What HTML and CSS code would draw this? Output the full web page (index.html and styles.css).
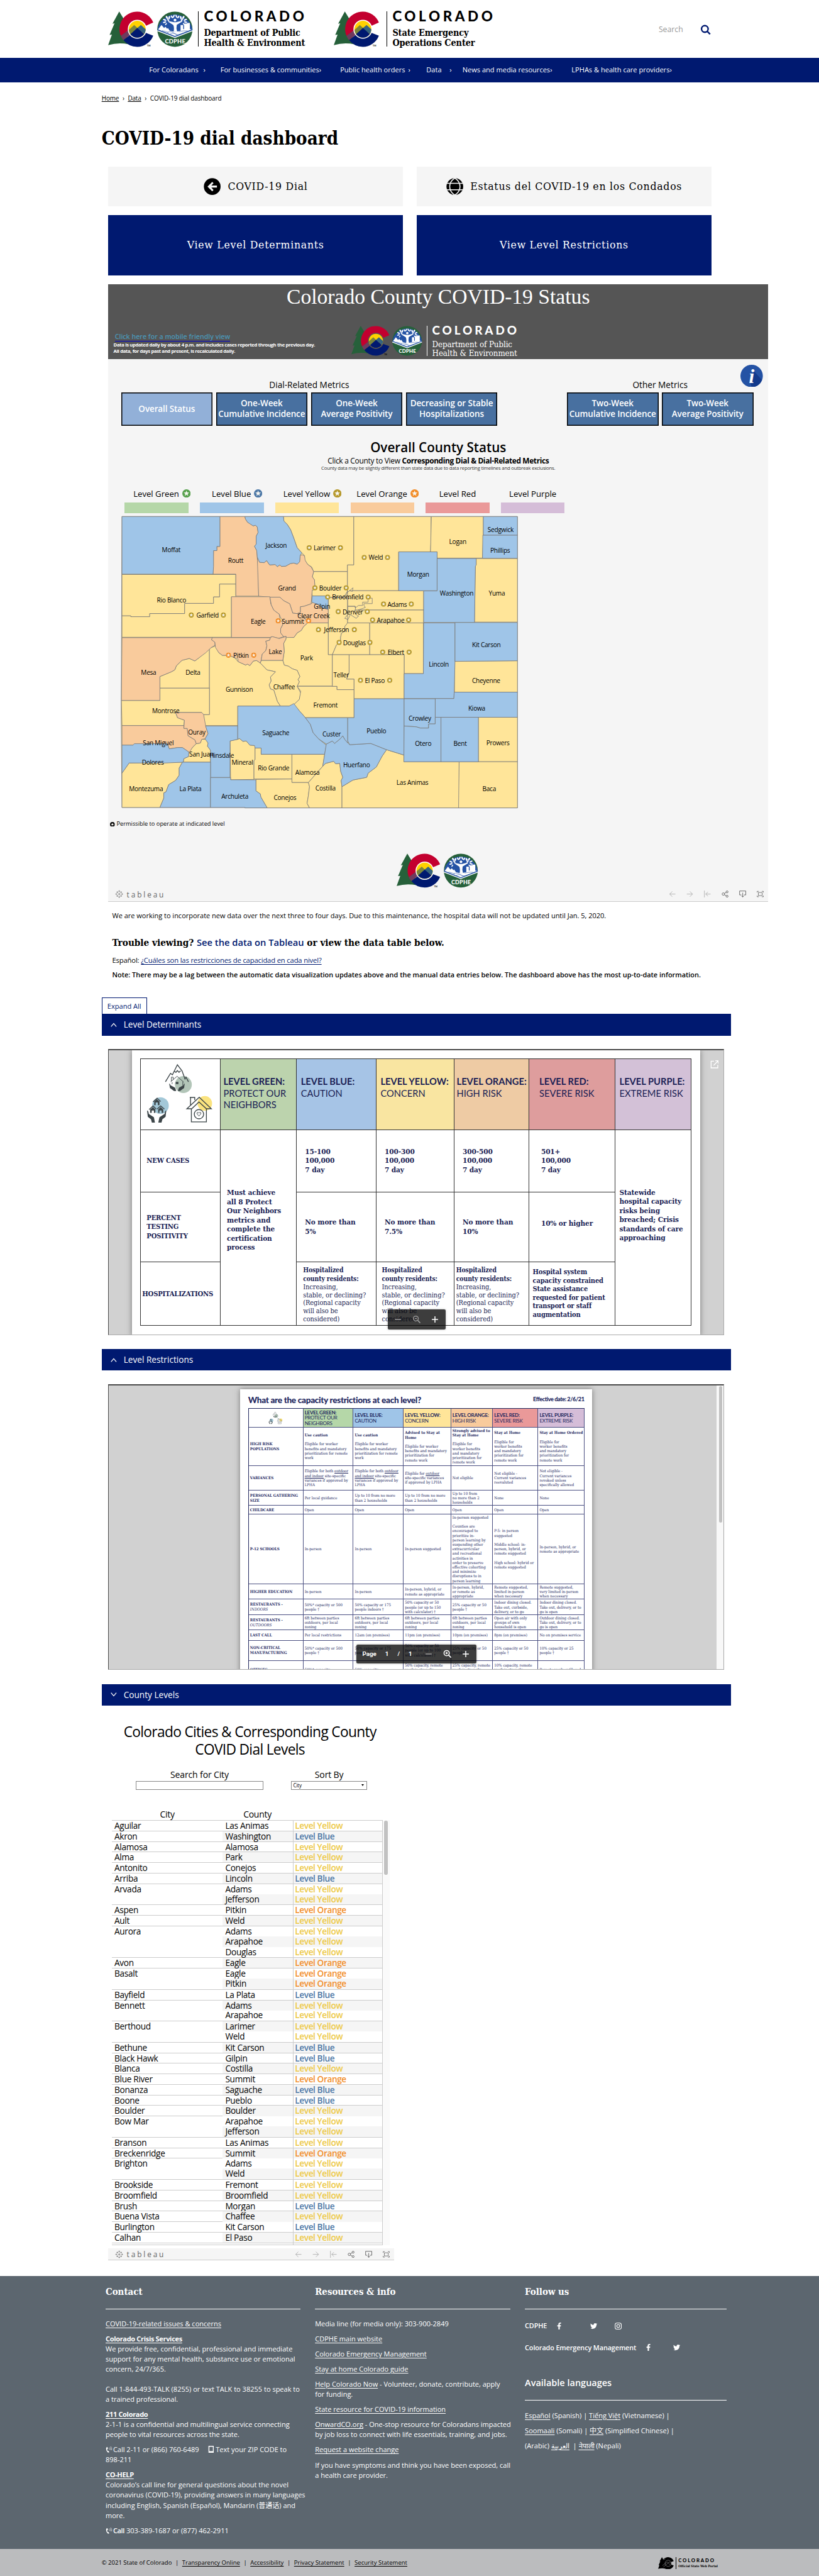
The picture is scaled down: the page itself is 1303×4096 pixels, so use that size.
FILE: index.html
```html
<!DOCTYPE html>
<html lang="en">
<head>
<meta charset="utf-8">
<title>COVID-19 dial dashboard</title>
<link rel="stylesheet" href="styles.css">
</head>
<body>
<svg class="defs" aria-hidden="true">
  <symbol id="co" viewBox="18 28 314 245" overflow="visible">
    <path fill="#26603a" d="M94 29L125 80 160 255Q90 240 18 260L44 188 28 190 62 110 48 113Z"/>
    <path fill="#c3002f" d="M328 105A121 121 0 0 0 218 30A121 121 0 0 0 105 197L160 158 280 126Z"/>
    <path fill="#001970" d="M123 226A121 121 0 0 0 218 272A121 121 0 0 0 328 195L283 178 218 150Z"/>
    <path fill="#6f3a5d" d="M105 197L160 155 180 180 123 226Q112 215 105 197Z"/>
    <circle class="ring" cx="218" cy="151" r="65"/>
    <clipPath id="disc"><circle cx="218" cy="151" r="58"/></clipPath>
    <g clip-path="url(#disc)">
      <path fill="#ffd100" d="M155 90h130v130H155z"/>
      <path fill="#7a853b" d="M150 165L197 122 225 148 180 195 150 190Z"/>
      <path fill="#35647e" d="M215 146L243 122 280 155 270 185Z"/>
      <path fill="#001970" d="M155 200L218 143 285 200V225H155Z"/>
    </g>
  </symbol>
  <symbol id="cdphe" viewBox="351 28 245 245" overflow="visible">
    <circle cx="473" cy="151" r="121" fill="#26603a"/>
    <path fill="#2452a4" d="M353 160A121 121 0 0 1 594 160L473 206Z"/>
    <path fill="none" stroke="#fff" stroke-width="6" d="M352 161L473 208 594 161"/>
    <path fill="#fff" d="M358 152L381 122 399 143 408 134 420 148 425 142 438 162 473 170 512 162V122H530V150H536V112H556V108H576V150L588 152 473 198Z"/>
    <path fill="none" stroke="#2452a4" stroke-width="2.5" d="M420 172Q450 162 470 180T530 178M440 184Q465 172 490 190M385 160Q420 168 430 176M500 168Q530 160 560 162"/>
    <path fill="#fff" d="M464 170Q470 140 462 122L425 98 428 95 466 103H482L522 93 525 97 486 121Q480 145 489 170Z"/>
    <circle cx="474" cy="88" r="9.500" fill="#fff"/>
    <g fill="#fff">
      <ellipse cx="403" cy="87" rx="13" ry="5" transform="rotate(25 403 87)"/><ellipse cx="418" cy="70" rx="12" ry="6" transform="rotate(60 418 70)"/><ellipse cx="402" cy="103" rx="12" ry="5" transform="rotate(-15 402 103)"/><ellipse cx="434" cy="72" rx="12" ry="6" transform="rotate(-70 434 72)"/><ellipse cx="427" cy="88" rx="9" ry="5" transform="rotate(40 427 88)"/><ellipse cx="452" cy="66" rx="11" ry="5" transform="rotate(60 452 66)"/><ellipse cx="465" cy="62" rx="12" ry="5" transform="rotate(-65 465 62)"/><ellipse cx="483" cy="62" rx="12" ry="5" transform="rotate(65 483 62)"/><ellipse cx="497" cy="67" rx="11" ry="5" transform="rotate(-60 497 67)"/><ellipse cx="514" cy="72" rx="12" ry="6" transform="rotate(70 514 72)"/><ellipse cx="531" cy="70" rx="12" ry="6" transform="rotate(-60 531 70)"/><ellipse cx="545" cy="86" rx="13" ry="5" transform="rotate(-25 545 86)"/><ellipse cx="546" cy="102" rx="12" ry="5" transform="rotate(15 546 102)"/><ellipse cx="521" cy="87" rx="9" ry="5" transform="rotate(-40 521 87)"/><ellipse cx="412" cy="116" rx="9" ry="4" transform="rotate(-50 412 116)"/><ellipse cx="534" cy="115" rx="9" ry="4" transform="rotate(50 534 115)"/>
    </g>
  </symbol>
  <symbol id="star" viewBox="-10 -10 20 20"><circle r="10"/><path fill="#f7f7f2" d="M0-7L1.800-2.300 6.700-2.200 2.800 1 4.200 5.700 0 2.900-4.200 5.700-2.800 1-6.700-2.200-1.800-2.300Z"/></symbol>
  <symbol id="tab" viewBox="0 0 20 20"><path fill="none" stroke="#777" stroke-width="1.200" d="M10 7v6M7 10h6M10 1v4M8 3h4M10 15v4M8 17h4M3 8v4M1 10h4M17 8v4M15 10h4M5.500 3.500v4M3.500 5.500h4M14.500 3.500v4M12.500 5.500h4M5.500 12.500v4M3.500 14.500h4M14.500 12.500v4M12.500 14.500h4"/></symbol>
  <symbol id="undo" viewBox="0 0 16 16"><path d="M15 8H2M8 2L2 8l6 6"/></symbol>
  <symbol id="redo" viewBox="0 0 16 16"><path d="M1 8h13M8 2l6 6-6 6"/></symbol>
  <symbol id="reset" viewBox="0 0 16 16"><path d="M1 0v16M15 8H4M9 3L4 8l5 5"/></symbol>
  <symbol id="share" viewBox="0 0 16 16"><circle cx="4" cy="8" r="2.800"/><circle cx="12.500" cy="3" r="2.300"/><circle cx="12.500" cy="13" r="2.300"/><path d="M6 7l4.500-3M6 9.200l4.500 2.800"/></symbol>
  <symbol id="down" viewBox="0 0 16 16"><path d="M5 10H1V1h14v9h-4M8 5v9M5.500 12L8 15l2.500-3"/></symbol>
  <symbol id="full" viewBox="0 0 18 16"><path d="M4 4h10v8H4zM1 4V1h4M13 1h4v3M17 12v3h-4M5 15H1v-3"/></symbol>
  <symbol id="fb" viewBox="0 0 320 512"><path d="M279.140 288l14.220-92.660h-88.910v-60.130c0-25.350 12.420-50.060 52.240-50.060h40.420V6.260S260.430 0 225.360 0c-73.220 0-121.080 44.380-121.080 124.720v70.620H22.890V288h81.390v224h100.170V288z"/></symbol>
  <symbol id="tw" viewBox="0 0 512 512"><path d="M459.370 151.716c.325 4.548.325 9.097.325 13.645 0 138.720-105.583 298.558-298.558 298.558-59.452 0-114.680-17.219-161.137-47.106 8.447.974 16.568 1.299 25.340 1.299 49.055 0 94.213-16.568 130.274-44.832-46.132-.975-84.792-31.188-98.112-72.772 6.498.974 12.995 1.624 19.818 1.624 9.421 0 18.843-1.300 27.614-3.573-48.081-9.747-84.143-51.980-84.143-102.985v-1.299c13.969 7.797 30.214 12.670 47.431 13.319-28.264-18.843-46.781-51.005-46.781-87.391 0-19.492 5.197-37.360 14.294-52.954 51.655 63.675 129.300 105.258 216.365 109.807-1.624-7.797-2.599-15.918-2.599-24.040 0-57.828 46.782-104.934 104.934-104.934 30.213 0 57.502 12.670 76.670 33.137 23.715-4.548 46.456-13.320 66.599-25.340-7.798 24.366-24.366 44.833-46.132 57.827 21.117-2.273 41.584-8.122 60.426-16.243-14.292 20.791-32.161 39.308-52.628 54.253z"/></symbol>
  <symbol id="phone" viewBox="0 0 16 16"><path fill="#fff" d="M4 1L1.500 3Q0 9 6 15l3-1-2-3.500-2 .5Q3.500 8.500 4 6l2-1z"/><path fill="none" stroke="#fff" d="M8 4q2 1 1.500 4M10 2q3.500 2 2.500 7M12 0q4.500 3.500 3 9"/></symbol>
  <symbol id="house" viewBox="0 0 545 480">
    <circle cx="292" cy="174" r="58" fill="#b2c5b8"/><circle cx="135" cy="318" r="57" fill="#a3c8d8"/><circle cx="439" cy="303" r="50" fill="#fae37f"/>
    <g fill="none" stroke="#3c4548" stroke-width="6"><path d="M169 155L204 97 217 107 251 38 283 80 303 135 310 123 327 155M228 82L241 90 251 78 262 90 273 80"/><path stroke-width="4" d="M205 155L249 117 295 158M210 150V123H222V140M288 155V180M215 158V170"/>
    <path d="M84 292L112 267 136 290M57 345L84 320 106 342M112 342L136 320 162 342"/><path d="M316 340L401 261 484 340H450L399 293 349 340ZM347 340V430H450V340M341 315V262H370V280M336 262h36"/><circle cx="399" cy="377" r="32"/><path stroke-width="4" d="M399 390L386 375Q384 363 393 364L399 369 405 364Q415 363 412 375Z"/></g>
    <g fill="#3c4548"><path d="M195 168Q200 165 203 178L235 195 243 218H228L200 198ZM301 168Q296 165 293 178L262 195 254 218H269L297 198Z"/><path d="M240 155h18v16h-18z"/><path d="M92 315V290L110 274 128 290V315H117V297H102V315ZM64 368V345L83 328 100 345V368H90V352H75V368ZM119 368V345L136 328 154 345V368H143V352H128V368Z"/><path d="M43 352Q52 352 55 375L90 398 97 435H76L70 412 48 395ZM175 352Q166 352 163 375L128 398 120 435H142L148 412 170 395Z"/></g>
  </symbol>
</svg>

<header class="top">
  <div class="brand">
    <svg class="m1" viewBox="18 28 314 245"><use href="#co" x="18" y="28" width="314" height="245"/><text class="tm" x="286" y="269">TM</text></svg><svg class="m2" viewBox="351 28 245 245"><use href="#cdphe" x="351" y="28" width="245" height="245"/><text class="cd" x="405" y="248">CDPHE</text></svg>
    <div class="btext"><b>COLORADO</b><span class="n1">Department of Public</span><span class="n2">Health &amp; Environment</span></div>
  </div>
  <div class="brand second">
    <svg class="m1" viewBox="18 28 314 245"><use href="#co" x="18" y="28" width="314" height="245"/><text class="tm" x="286" y="269">TM</text></svg>
    <div class="btext"><b>COLORADO</b><span class="n1">State Emergency</span><span class="n1">Operations Center</span></div>
  </div>
  <div class="search"><span>Search</span><svg viewBox="0 0 24 24"><circle cx="10" cy="10" r="7.500"/><path d="M15.500 15.500L22 22"/></svg></div>
</header>
<nav class="nav"><a>For Coloradans <i class="s1">›</i></a><a>For businesses &amp; communities<i>›</i></a><a>Public health orders <i class="s2">›</i></a><a>Data <i class="s3">›</i></a><a>News and media resources<i>›</i></a><a>LPHAs &amp; health care providers<i>›</i></a></nav>

<main class="main">
  <div class="crumbs"><u>Home</u><i>›</i><u>Data</u><i>›</i><span>COVID-19 dial dashboard</span></div>
  <h1>COVID-19 dial dashboard</h1>
  <div class="tiles">
    <a class="tile light"><svg viewBox="0 0 40 40"><circle cx="20" cy="20" r="19.500"/><path fill="#f5f5f5" d="M9 20L20 9l3 3-5 5.500H31v5H18l5 5.500-3 3z"/></svg>COVID-19 Dial</a>
    <a class="tile light"><svg viewBox="0 0 40 40"><circle cx="20" cy="20" r="19.500"/><path fill="none" stroke="#f5f5f5" stroke-width="2.400" d="M0 12.500h40M0 27.500h40M20 0Q8 8 8 20T20 40M20 0Q32 8 32 20T20 40"/></svg>Estatus del COVID-19 en los Condados</a>
    <a class="tile dark">View Level Determinants</a>
    <a class="tile dark">View Level Restrictions</a>
  </div>

  <section class="viz">
    <div class="vhead">
      <h2>Colorado County COVID-19 Status</h2>
      <div class="vrow">
        <div class="vnote"><a>Click here for a mobile friendly view</a><p>Data is updated daily by about 4 p.m. and includes cases reported through the previous day.</p><p>All data, for days past and present, is recalculated daily.</p></div>
        <div class="brand onDark">
          <svg class="m1" viewBox="18 28 314 245"><use href="#co" x="18" y="28" width="314" height="245"/><text class="tm" x="286" y="269">TM</text></svg><svg class="m2" viewBox="351 28 245 245"><use href="#cdphe" x="351" y="28" width="245" height="245"/><text class="cd" x="405" y="248">CDPHE</text></svg>
          <div class="btext"><b>COLORADO</b><span class="n1">Department of Public</span><span class="n2">Health &amp; Environment</span></div>
        </div>
      </div>
    </div>
    <svg class="info" viewBox="0 0 50 50"><circle cx="25" cy="25" r="25" fill="#2452a4"/><path fill="#123a8c" d="M30 14L48 34A25 25 0 0 1 25 50L22 39Z"/><text x="25" y="40" text-anchor="middle" fill="#fff" font-family="Liberation Serif" font-style="italic" font-weight="700" font-size="44">i</text></svg>
    <div class="metrics">
      <div class="mg"><h4>Dial-Related Metrics</h4><div class="btns"><a class="on">Overall Status</a><a>One-Week<br>Cumulative Incidence</a><a>One-Week<br>Average Positivity</a><a>Decreasing or Stable<br>Hospitalizations</a></div></div>
      <div class="mg"><h4>Other Metrics</h4><div class="btns"><a>Two-Week<br>Cumulative Incidence</a><a>Two-Week<br>Average Positivity</a></div></div>
    </div>
    <h3 class="ocs">Overall County Status</h3>
    <p class="ocs2">Click a County to View <b>Corresponding Dial &amp; Dial-Related Metrics</b></p>
    <p class="ocs3">County data may be slightly different than state data due to data reporting timelines and outbreak exclusions.</p>
    <div class="legend">
      <div class="lg st">Level Green<svg fill="#59a14f"><use href="#star"/></svg></div>
      <div class="lg st">Level Blue<svg fill="#4e79a7"><use href="#star"/></svg></div>
      <div class="lg st">Level Yellow<svg fill="#b6992d"><use href="#star"/></svg></div>
      <div class="lg st">Level Orange<svg fill="#f28e2b"><use href="#star"/></svg></div>
      <div class="lg">Level Red</div>
      <div class="lg">Level Purple</div>
      <div class="bar green"></div><div class="bar blue"></div><div class="bar yellow"></div><div class="bar orange"></div><div class="bar red"></div><div class="bar purple"></div>
    </div>
    <svg class="map" viewBox="6 16 980 694">
      <g transform="scale(.625 .472)" class="lines">
        <path class="y" d="M60 50H1498V1452H507V1450H60L57 1010Z"/>
        <g class="y">
          <path d="M60 329H474V375H415V437H393V468H288V517H161V532H92V528H60Z"/>
          <path d="M474 375V437H458V631H60V528H92V532H161V517H288V468H393V437H415V375Z"/>
          <path d="M647 50H903V283H880V315H757L750 293 735 280 724 258V238L712 222 697 200 685 155 673 113 661 88 649 72Z"/>
          <path d="M757 315H880V410L867 437 810 440 800 432H752L750 405 762 400 760 355 752 340Z"/>
          <path d="M903 50H1184V155L1182 220H1066V407H888L880 415V283H903Z"/>
          <path d="M1185 50H1374V140L1371 250H1206V220H1182Z"/>
          <path d="M1348 252H1498V558H1342L1345 283H1348Z"/>
          <path d="M880 415L900 393 898 410 888 407H1157V500H917L945 488 940 478V469H970V443H955V462H935V478H920L908 490V482H881Z"/>
          <path d="M905 500H1157V562H880V545"/>
          <path d="M810 440V715H825L840 668 855 655V632L858 612 872 598 870 580 880 565V440Z"/>
          <path fill="none" d="M867 437L878 425 880 405M880 445L900 440M881 482H908L910 500 905 510 918 530 921 527 912 540 890 522 882 545 870 540 882 520 881 482"/>
          <path d="M880 562H961V715H825L840 668 855 655V632L858 612 872 598 870 580Z"/>
          <path d="M961 562H1156V806H1086V715H961Z"/>
          <path d="M1269 746L1498 744V895H1269Z"/>
          <path d="M735 562H810V715H825V866H697L705 845 700 835 707 820 697 790 680 783 665 770 650 765 645 742 650 700 648 660 656 640 657 628 685 632 697 610 712 598 720 580Z"/>
          <path d="M378 685V876H198V820L240 797 252 788 258 768 278 742 305 733 325 745 340 730Z"/>
          <path d="M566 742H645L650 765 665 770 680 783 697 790 707 820 700 835 705 845 697 867 710 900 705 930 685 955 668 962H636L625 940 612 885 600 880 595 860 602 842 600 822 618 797 587 788 563 755Z"/>
          <path d="M378 685L400 672 412 705 425 718H450L470 730 482 748 510 765 516 760 525 767 538 745 550 743 563 755 587 788 618 797 600 822 602 842 595 860 600 880 612 885 625 940 636 962H481V1056H362L350 1003H378Z"/>
          <path d="M58 935H198V876H378V1003H350V993H255L262 1018 287 1030 285 1056H60Z"/>
          <path d="M330 1143L345 1140 350 1122H365L373 1140 371 1155 382 1175V1232H283L285 1215 302 1205V1185L317 1160Z"/>
          <path d="M86 1236L280 1232 268 1260V1295L255 1320 230 1340 220 1375 212 1380V1405L198 1450H60V1285Z"/>
          <path d="M697 867H842V883H904V1018H727L705 985 685 955 705 930 710 890Z"/>
          <path d="M825 715H886V800L877 832H904V883H842V867H825Z"/>
          <path d="M886 715H1086V927H904V832H877L886 800Z"/>
          <path d="M453 1130L481 1122 487 1118 500 1132 512 1130 525 1150 544 1152V1220L540 1225V1315L455 1317Z"/>
          <path d="M544 1164H566V1194H678V1313H540V1225L544 1220Z"/>
          <path d="M678 1194H797L790 1252 738 1330H678Z"/>
          <path d="M547 1315L678 1313V1330H738L742 1350 737 1400 733 1430 742 1452H588L565 1400 563 1385 547 1370Z"/>
          <path d="M738 1330L790 1252 800 1238 830 1228 837 1240 852 1238 855 1275 863 1305 857 1320 860 1350V1452H742L733 1430 737 1400 742 1350Z"/>
          <path d="M1356 1016H1498V1230H1356Z"/>
          <path d="M1022 1172L1085 1198V1230H1286V1452H860V1350L900 1318 950 1305 955 1285 985 1255 1005 1205Z"/>
          <path d="M1286 1230H1498V1452H1284Z"/>
        </g>
        <g class="o">
          <path d="M416 50H507L509 62 517 78 525 83 537 95 545 92 552 100 555 127 548 145V183L542 193 550 214 552 245 555 290 557 433H474V327H391L393 214H405V194H416Z"/>
          <path d="M552 245L560 270 577 272 586 262 597 283 617 281 625 291 634 283 640 290 655 289 673 276 685 274 697 279 706 268 708 237 716 234 724 240 726 260 735 280 748 293 757 315 752 340 760 355 762 400 752 404 750 432 748 470 722 482 709 484V512L697 517 681 515 670 470 648 455 634 438H598L557 433Z"/>
          <path d="M458 436H598L601 470 612 500 632 520 636 552 648 560 637 590V610L648 628 630 636 605 628 598 632H458Z"/>
          <path d="M598 438H634L648 455 670 470 681 515 697 517 709 525 730 548 735 562 720 580 712 598 697 610 685 632H660L655 627 648 628 637 610V590L645 570 642 545 636 535 632 520 612 500 603 475Z"/>
          <path d="M709 484L722 482 748 470 755 462 775 475 790 490 810 497V562H735L728 545 709 525 697 517 709 512Z"/>
          <path d="M60 633H390L386 643 398 655V670L385 680 365 705 340 730 325 745 305 733 278 742 258 768 252 788 240 797 198 820V935H58Z"/>
          <path d="M388 633H600L597 645 583 650 587 672 583 695 570 712 566 742 563 755 550 743 538 745 525 767 516 760 510 765 482 748V735L470 730 450 718H425L412 705 400 680 398 655 386 643Z"/>
          <path d="M600 632L607 628 632 637 657 627 656 640 648 660 650 700 645 742H566L570 712 583 695 587 672 583 650 597 645Z"/>
          <path d="M255 993H350L357 1003 364 1056 373 1095 362 1120 350 1122 345 1140 330 1143 325 1125 300 1105 297 1070H285L287 1030 262 1018Z"/>
          <path d="M60 1056H285V1070H297L300 1105 325 1125 330 1143 317 1160 305 1185 280 1162H262L232 1168 225 1143 105 1147 100 1150H60Z"/>
        </g>
        <g class="b">
          <path d="M60 50H416V194H405V214H393V290L391 327H60Z"/>
          <path d="M507 50H647L649 72 661 88 673 113 685 155 697 200 714 225 708 237 706 268 697 279 685 274 673 276 655 289 640 290 634 283 625 291 617 281 597 283 586 262 577 272 560 270 552 245 550 214 542 193 548 183V145L555 127 552 100 545 92 537 95 517 78 509 62Z"/>
          <path d="M752 432H800L810 437V497L790 490 775 475 750 462Z"/>
          <path d="M1374 50H1498V140H1374Z"/><path d="M1372 140H1498V251H1371Z"/><path d="M1066 220H1206V407H1066Z"/>
          <path d="M1206 252H1348V283L1345 290 1342 560H1157V408H1206Z"/>
          <path d="M1157 562H1271V746L1268 895 1267 926H1086V806H1156Z"/>
          <path d="M1271 560H1498V744L1271 747Z"/><path d="M1268 895H1498V1016H1199V926H1267Z"/>
          <path d="M60 1150H100L105 1143H225L232 1168 262 1162H280L303 1183 302 1205 285 1215 283 1232 220 1236H86L60 1285Z"/>
          <path d="M364 1058H481V1122L453 1130V1306H382V1175L371 1155 373 1140 362 1120 373 1095Z"/>
          <path d="M280 1232H382V1450H198L212 1405V1380L220 1375 230 1340 255 1320 268 1295V1260Z"/>
          <path d="M382 1306H455V1317H547V1370L563 1385 565 1400 588 1452H507V1450H382Z"/>
          <path d="M481 962H668L685 950 705 985 727 1018 745 1050 755 1090 775 1120 803 1150 797 1194H566V1164H544L542 1152 525 1150 512 1130 500 1132 487 1118 481 1122Z"/>
          <path d="M803 1145L825 1130 833 1142 855 1118 863 1105 870 1122 888 1148 965 1142 1022 1172 1005 1205 985 1255 955 1285 950 1305 900 1318 860 1350 857 1320 863 1305 855 1275 852 1238 837 1240 830 1228 800 1238 790 1252 797 1194Z"/>
          <path d="M727 1018H881V1140L870 1122 863 1105 855 1118 833 1142 825 1130 803 1145 775 1120 755 1090 745 1050Z"/>
          <path d="M904 927H1086V1198L1022 1172 965 1142 888 1148 881 1130V1018H904Z"/>
          <path d="M1086 927H1199V1048H1175V1068H1145L1130 1062 1086 1058Z"/>
          <path d="M1086 1058L1130 1062 1145 1068H1175V1048H1199V1016H1220V1230H1085Z"/>
          <path d="M1220 1016H1356V1230H1220Z"/>
        </g>
      </g>
      <g fill="#b6992d">
        <use href="#star" x="457" y="88.500" width="12" height="12"/><use href="#star" x="528" y="88.500" width="12" height="12"/>
        <use href="#star" x="582" y="110.500" width="12" height="12"/><use href="#star" x="635" y="110.500" width="12" height="12"/>
        <use href="#star" x="470" y="179.500" width="12" height="12"/><use href="#star" x="541" y="179.500" width="12" height="12"/>
        <use href="#star" x="499" y="200.500" width="12" height="12"/><use href="#star" x="591" y="200.500" width="12" height="12"/>
        <use href="#star" x="626" y="216.500" width="12" height="12"/><use href="#star" x="689" y="216.500" width="12" height="12"/>
        <use href="#star" x="189" y="241.500" width="12" height="12"/><use href="#star" x="262" y="241.500" width="12" height="12"/>
        <use href="#star" x="523" y="233.500" width="12" height="12"/><use href="#star" x="589" y="233.500" width="12" height="12"/>
        <use href="#star" x="601" y="252.500" width="12" height="12"/><use href="#star" x="683" y="252.500" width="12" height="12"/>
        <use href="#star" x="478" y="274.500" width="12" height="12"/><use href="#star" x="559.500" y="274.500" width="12" height="12"/>
        <use href="#star" x="525" y="303.500" width="12" height="12"/><use href="#star" x="595" y="303.500" width="12" height="12"/>
        <use href="#star" x="624" y="325.500" width="12" height="12"/><use href="#star" x="684" y="325.500" width="12" height="12"/>
        <use href="#star" x="573.500" y="389.500" width="12" height="12"/><use href="#star" x="640" y="389.500" width="12" height="12"/>
      </g>
      <g fill="#f28e2b">
        <use href="#star" x="386.500" y="254.500" width="12" height="12"/><use href="#star" x="455.500" y="254.500" width="12" height="12"/>
        <use href="#star" x="273.500" y="332.500" width="12" height="12"/><use href="#star" x="331" y="332.500" width="12" height="12"/>
      </g>
      <g class="names">
        <text x="149.400" y="98.200">Moffat</text><text x="388" y="88.700">Jackson</text><text x="498" y="94.900">Larimer</text><text x="800.600" y="79.800">Logan</text><text x="898" y="52.900">Sedgwick</text><text x="897" y="99.600">Phillips</text><text x="614.400" y="116.600">Weld</text><text x="296" y="122.700">Routt</text><text x="710.600" y="154.800">Morgan</text><text x="412.500" y="186">Grand</text><text x="511" y="185.500">Boulder</text><text x="150" y="212.900">Rio Blanco</text><text x="550.600" y="206.700">Broomfield</text><text x="798" y="197.800">Washington</text><text x="889.400" y="197.800">Yuma</text><text x="492" y="227">Gilpin</text><text x="663" y="222.800">Adams</text><text x="232" y="247.800">Garfield</text><text x="347" y="261">Eagle</text><text x="473" y="248.700">Clear Creek</text><text x="426" y="261">Summit</text><text x="562" y="239.800">Denver</text><text x="648" y="258.700">Arapahoe</text><text x="525" y="280.800">Jefferson</text><text x="565.600" y="309.600">Douglas</text><text x="660" y="331.800">Elbert</text><text x="865.600" y="314.800">Kit Carson</text><text x="757.500" y="358.700">Lincoln</text><text x="98" y="378">Mesa</text><text x="308" y="338.900">Pitkin</text><text x="386" y="330.900">Lake</text><text x="457" y="345">Park</text><text x="198.700" y="377">Delta</text><text x="535.600" y="382.800">Teller</text><text x="612" y="396">El Paso</text><text x="865" y="396">Cheyenne</text><text x="304" y="415.800">Gunnison</text><text x="406" y="410">Chaffee</text><text x="500" y="451.700">Fremont</text><text x="843.700" y="458.800">Kiowa</text><text x="137" y="464">Montrose</text><text x="714.400" y="482.400">Crowley</text><text x="207.500" y="513">Ouray</text><text x="387" y="514">Saguache</text><text x="514" y="518">Custer</text><text x="615.600" y="510">Pueblo</text><text x="120" y="537">San Miguel</text><text x="722" y="539.500">Otero</text><text x="806" y="539.500">Bent</text><text x="892" y="537">Prowers</text><text x="218" y="563">San Juan</text><text x="264" y="566">Hinsdale</text><text x="107.500" y="581">Dolores</text><text x="311" y="582">Mineral</text><text x="382" y="594">Rio Grande</text><text x="570.600" y="587">Huerfano</text><text x="459" y="605">Alamosa</text><text x="697.500" y="627">Las Animas</text><text x="92" y="641">Montezuma</text><text x="193" y="641">La Plata</text><text x="500" y="640">Costilla</text><text x="408" y="661">Conejos</text><text x="294" y="659">Archuleta</text><text x="872" y="642">Baca</text>
      </g>
    </svg>
    <p class="perm"><svg><use href="#star"/></svg>Permissible to operate at indicated level</p>
    <div class="brand mid"><svg class="m1" viewBox="18 28 314 245"><use href="#co" x="18" y="28" width="314" height="245"/><text class="tm" x="286" y="269">TM</text></svg><svg class="m2" viewBox="351 28 245 245"><use href="#cdphe" x="351" y="28" width="245" height="245"/><text class="cd" x="405" y="248">CDPHE</text></svg></div>
    <div class="tbar"><svg class="tl"><use href="#tab"/></svg><span>tableau</span><div class="ti"><svg class="dim"><use href="#undo"/></svg><svg class="dim"><use href="#redo"/></svg><svg class="dim"><use href="#reset"/></svg><svg><use href="#share"/></svg><svg><use href="#down"/></svg><svg><use href="#full"/></svg></div></div>
  </section>

  <p class="maint">We are working to incorporate new data over the next three to four days. Due to this maintenance, the hospital data will not be updated until Jan. 5, 2020.</p>
  <h3 class="trouble">Trouble viewing? <a>See the data on Tableau</a> or view the data table below.</h3>
  <p class="esp">Español: <a>¿Cuáles son las restricciones de capacidad en cada nivel?</a></p>
  <p class="note">Note: There may be a lag between the automatic data visualization updates above and the manual data entries below. The dashboard above has the most up-to-date information.</p>

  <button class="expand">Expand All</button>
  <div class="acc"><svg viewBox="0 0 14 10"><path d="M1 9l6-7 6 7"/></svg>Level Determinants</div>
  <div class="frame f1">
    <div class="sheet1">
      <div class="dt">
        <div class="c pic"><svg><use href="#house"/></svg></div>
        <div class="c h green"><b>LEVEL GREEN:</b>PROTECT OUR<br>NEIGHBORS</div>
        <div class="c h blue"><b>LEVEL BLUE:</b>CAUTION</div>
        <div class="c h yellow"><b>LEVEL YELLOW:</b>CONCERN</div>
        <div class="c h orange"><b>LEVEL ORANGE:</b>HIGH RISK</div>
        <div class="c h red"><b>LEVEL RED:</b>SEVERE RISK</div>
        <div class="c h purple"><b>LEVEL PURPLE:</b>EXTREME RISK</div>
        <div class="c rl">NEW CASES</div>
        <div class="c tall must"><span>Must achieve<br>all 8 Protect<br>Our Neighbors<br>metrics and<br>complete the<br>certification<br>process</span></div>
        <div class="c"><span>15-100<br>100,000<br>7 day</span></div><div class="c"><span>100-300<br>100,000<br>7 day</span></div><div class="c"><span>300-500<br>100,000<br>7 day</span></div><div class="c r5"><span>501+<br>100,000<br>7 day</span></div>
        <div class="c tall state"><span>Statewide<br>hospital capacity<br>risks being<br>breached; Crisis<br>standards of care<br>approaching</span></div>
        <div class="c rl">PERCENT<br>TESTING<br>POSITIVITY</div>
        <div class="c"><span>No more than<br>5%</span></div><div class="c"><span>No more than<br>7.5%</span></div><div class="c"><span>No more than<br>10%</span></div><div class="c r5 up"><span>10% or higher</span></div>
        <div class="c rl hl">HOSPITALIZATIONS</div>
        <div class="c hs p1"><span><b>Hospitalized<br>county residents:</b><br>Increasing,<br>stable, or declining?<br>(Regional capacity<br>will also be<br>considered)</span></div>
        <div class="c hs p2"><span><b>Hospitalized<br>county residents:</b><br>Increasing,<br>stable, or declining?<br>(Regional capacity<br>will also be<br>considered)</span></div>
        <div class="c hs p3"><span><b>Hospitalized<br>county residents:</b><br>Increasing,<br>stable, or declining?<br>(Regional capacity<br>will also be<br>considered)</span></div>
        <div class="c sys"><span>Hospital system<br>capacity constrained<br>State assistance<br>requested for patient<br>transport or staff<br>augmentation</span></div>
      </div>
    </div>
    <svg class="pop" viewBox="0 0 20 20"><path d="M9 2H2v16h16v-7M12 1h7v7M19 1L8 12"/></svg>
    <div class="ctl z1"><svg class="dim" viewBox="0 0 20 20"><path d="M3 10h14"/></svg><svg class="dim" viewBox="0 0 20 20"><circle cx="8" cy="8" r="5.500"/><path d="M12 12l6 6M5.500 8h5"/></svg><svg viewBox="0 0 20 20"><path d="M3 10h14M10 3v14"/></svg></div>
  </div>

  <div class="acc"><svg viewBox="0 0 14 10"><path d="M1 9l6-7 6 7"/></svg>Level Restrictions</div>
  <div class="frame f2">
    <div class="sheet2">
      <div class="rt-head"><b>What are the capacity restrictions at each level?</b><span>Effective date: 2/6/21</span></div>
      <div class="rt">
        <div class="pic"><svg><use href="#house"/></svg></div><div class="h green"><span><b>LEVEL GREEN:</b><br>PROTECT OUR<br>NEIGHBORS</span></div><div class="h blue"><span><b>LEVEL BLUE:</b><br>CAUTION</span></div><div class="h yellow"><span><b>LEVEL YELLOW:</b><br>CONCERN</span></div><div class="h orange"><span><b>LEVEL ORANGE:</b><br>HIGH RISK</span></div><div class="h red"><span><b>LEVEL RED:</b><br>SEVERE RISK</span></div><div class="h purple"><span><b>LEVEL PURPLE:</b><br>EXTREME RISK</span></div>
        <div class="k"><span>HIGH RISK<br>POPULATIONS</span></div><div><span><b>Use caution</b><br><br>Eligible for worker<br>benefits and mandatory<br>prioritization for remote<br>work</span></div><div><span><b>Use caution</b><br><br>Eligible for worker<br>benefits and mandatory<br>prioritization for remote<br>work</span></div><div><span><b>Advised to Stay at<br>Home</b><br><br>Eligible for worker<br>benefits and mandatory<br>prioritization for<br>remote work</span></div><div><span><b>Strongly advised to<br>Stay at Home</b><br><br>Eligible for<br>worker benefits<br>and mandatory<br>prioritization for<br>remote work</span></div><div><span><b>Stay at Home</b><br><br>Eligible for<br>worker benefits<br>and mandatory<br>prioritization for<br>remote work</span></div><div><span><b>Stay at Home Ordered</b><br><br>Eligible for<br>worker benefits<br>and mandatory<br>prioritization for<br>remote work</span></div>
        <div class="k"><span>VARIANCES</span></div><div><span>Eligible for both <u>outdoor</u><br><u>and indoor</u> site-specific<br>variances if approved by<br>LPHA</span></div><div><span>Eligible for both <u>outdoor</u><br><u>and indoor</u> site-specific<br>variances if approved by<br>LPHA</span></div><div><span>Eligible for <u>outdoor</u><br>site-specific variances<br>if approved by LPHA</span></div><div><span>Not eligible</span></div><div><span>Not eligible -<br>Current variances<br>reevaluted</span></div><div><span>Not eligible -<br>Current variances<br>revoked unless<br>specifically allowed</span></div>
        <div class="k"><span>PERSONAL GATHERING<br>SIZE</span></div><div><span>Per local guidance</span></div><div><span>Up to 10 from no more<br>than 2 households</span></div><div><span>Up to 10 from no more<br>than 2 households</span></div><div><span>Up to 10 from<br>no more than 2<br>households</span></div><div><span>None</span></div><div><span>None</span></div>
        <div class="k"><span>CHILDCARE</span></div><div>Open</div><div>Open</div><div>Open</div><div>Open</div><div>Open</div><div>Open</div>
        <div class="k"><span>P-12 SCHOOLS</span></div><div>In-person</div><div>In-person</div><div>In-person suggested</div><div><span>In-person suggested<br><br>Counties are<br>encouraged to<br>prioritize in-<br>person learning by<br>suspending other<br>extracurricular<br>and recreational<br>activities in<br>order to preserve<br>effective cohorting<br>and minimize<br>disruptions to in<br>person learning</span></div><div><span>P-5: in person<br>suggested<br><br>Middle school: in-<br>person, hybrid, or<br>remote suggested<br><br>High school: hybrid or<br>remote suggested</span></div><div><span>In-person, hybrid, or<br>remote as appropriate</span></div>
        <div class="k"><span>HIGHER EDUCATION</span></div><div>In-person</div><div>In-person</div><div><span>In-person, hybrid, or<br>remote as appropriate</span></div><div><span>In-person, hybrid,<br>or remote as<br>appropriate</span></div><div><span>Remote suggested,<br>limited in-person<br>when necessary</span></div><div><span>Remote suggested,<br>very limited in-person<br>when necessary</span></div>
        <div class="k"><span>RESTAURANTS -<br><i>INDOORS</i></span></div><div><span>50%* capacity or 500<br>people †</span></div><div><span>50% capacity or 175<br>people indoors †</span></div><div><span>50% capacity or 50<br>people (or up to 150<br>with calculator) †</span></div><div><span>25% capacity or 50<br>people †</span></div><div><span>Indoor dining closed.<br>Take out, curbside,<br>delivery, or to go</span></div><div><span>Indoor dining closed.<br>Take out, delivery, or to<br>go is open</span></div>
        <div class="k"><span>RESTAURANTS -<br><i>OUTDOORS</i></span></div><div><span>6ft between parties<br>outdoors, per local<br>zoning</span></div><div><span>6ft between parties<br>outdoors, per local<br>zoning</span></div><div><span>6ft between parties<br>outdoors, per local<br>zoning</span></div><div><span>6ft between parties<br>outdoors, per local<br>zoning</span></div><div><span>Open air with only<br>groups of own<br>household is open</span></div><div><span>Outdoor dining closed.<br>Take out, delivery, or to<br>go is open</span></div>
        <div class="k"><span>LAST CALL</span></div><div>Per local restrictions</div><div>12am (on premises)</div><div>11pm (on premises)</div><div>10pm (on premises)</div><div>8pm (on premises)</div><div>No on premises service</div>
        <div class="k"><span>NON-CRITICAL<br>MANUFACTURING</span></div><div><span>50%* capacity or 500<br>people †</span></div><div><span>50% capacity or 175<br>people †</span></div><div><span>50% capacity or 50<br>people (or up to 100<br>with calculator) †</span></div><div><span>25% capacity or 50<br>people †</span></div><div><span>25% capacity or 50<br>people †</span></div><div><span>10% capacity or 25<br>people †</span></div>
        <div class="k"><span>OFFICES</span></div><div>50%* capacity</div><div>50% capacity</div><div><span>50% capacity, remote<br>work is strongly<br>encouraged</span></div><div><span>25% capacity, remote<br>work is strongly<br>encouraged</span></div><div><span>10% capacity, remote<br>work is strongly<br>encouraged</span></div><div>Remote work or Closed</div>
      </div>
    </div>
    <div class="track"><i></i></div>
    <div class="ctl z2"><span class="pg"><em>Page</em><em>1</em><em>/</em><em>1</em></span><svg class="dim" viewBox="0 0 20 20"><path d="M3 10h14"/></svg><svg viewBox="0 0 20 20"><circle cx="8" cy="8" r="6"/><path d="M12 12l6 6M5.500 8h5M8 5.500v5"/></svg><svg viewBox="0 0 20 20"><path d="M3 10h14M10 3v14"/></svg></div>
  </div>

  <div class="acc"><svg viewBox="0 0 14 10"><path d="M1 1l6 7 6-7"/></svg>County Levels</div>
  <section class="cities">
    <h2>Colorado Cities &amp; Corresponding County<br>COVID Dial Levels</h2>
    <div class="filters"><label class="fs">Search for City<span class="box"></span></label><label class="fo">Sort By<span class="box">City<i></i></span></label></div>
    <div class="heads"><span>City</span><span>County</span></div>
    <div class="tablewrap">
      <div class="rows">
        <div class="row new"><span>Aguilar</span><span>Las Animas</span><b>Level Yellow</b></div>
        <div class="row new"><span>Akron</span><span>Washington</span><b class="lb">Level Blue</b></div>
        <div class="row new"><span>Alamosa</span><span>Alamosa</span><b>Level Yellow</b></div>
        <div class="row new"><span>Alma</span><span>Park</span><b>Level Yellow</b></div>
        <div class="row new"><span>Antonito</span><span>Conejos</span><b>Level Yellow</b></div>
        <div class="row new"><span>Arriba</span><span>Lincoln</span><b class="lb">Level Blue</b></div>
        <div class="row new"><span>Arvada</span><span>Adams</span><b>Level Yellow</b></div>
        <div class="row"><span></span><span>Jefferson</span><b>Level Yellow</b></div>
        <div class="row new"><span>Aspen</span><span>Pitkin</span><b class="lo">Level Orange</b></div>
        <div class="row new"><span>Ault</span><span>Weld</span><b>Level Yellow</b></div>
        <div class="row new"><span>Aurora</span><span>Adams</span><b>Level Yellow</b></div>
        <div class="row"><span></span><span>Arapahoe</span><b>Level Yellow</b></div>
        <div class="row"><span></span><span>Douglas</span><b>Level Yellow</b></div>
        <div class="row new"><span>Avon</span><span>Eagle</span><b class="lo">Level Orange</b></div>
        <div class="row new"><span>Basalt</span><span>Eagle</span><b class="lo">Level Orange</b></div>
        <div class="row"><span></span><span>Pitkin</span><b class="lo">Level Orange</b></div>
        <div class="row new"><span>Bayfield</span><span>La Plata</span><b class="lb">Level Blue</b></div>
        <div class="row new"><span>Bennett</span><span>Adams</span><b>Level Yellow</b></div>
        <div class="row"><span></span><span>Arapahoe</span><b>Level Yellow</b></div>
        <div class="row new"><span>Berthoud</span><span>Larimer</span><b>Level Yellow</b></div>
        <div class="row"><span></span><span>Weld</span><b>Level Yellow</b></div>
        <div class="row new"><span>Bethune</span><span>Kit Carson</span><b class="lb">Level Blue</b></div>
        <div class="row new"><span>Black Hawk</span><span>Gilpin</span><b class="lb">Level Blue</b></div>
        <div class="row new"><span>Blanca</span><span>Costilla</span><b>Level Yellow</b></div>
        <div class="row new"><span>Blue River</span><span>Summit</span><b class="lo">Level Orange</b></div>
        <div class="row new"><span>Bonanza</span><span>Saguache</span><b class="lb">Level Blue</b></div>
        <div class="row new"><span>Boone</span><span>Pueblo</span><b class="lb">Level Blue</b></div>
        <div class="row new"><span>Boulder</span><span>Boulder</span><b>Level Yellow</b></div>
        <div class="row new"><span>Bow Mar</span><span>Arapahoe</span><b>Level Yellow</b></div>
        <div class="row"><span></span><span>Jefferson</span><b>Level Yellow</b></div>
        <div class="row new"><span>Branson</span><span>Las Animas</span><b>Level Yellow</b></div>
        <div class="row new"><span>Breckenridge</span><span>Summit</span><b class="lo">Level Orange</b></div>
        <div class="row new"><span>Brighton</span><span>Adams</span><b>Level Yellow</b></div>
        <div class="row"><span></span><span>Weld</span><b>Level Yellow</b></div>
        <div class="row new"><span>Brookside</span><span>Fremont</span><b>Level Yellow</b></div>
        <div class="row new"><span>Broomfield</span><span>Broomfield</span><b>Level Yellow</b></div>
        <div class="row new"><span>Brush</span><span>Morgan</span><b class="lb">Level Blue</b></div>
        <div class="row new"><span>Buena Vista</span><span>Chaffee</span><b>Level Yellow</b></div>
        <div class="row new"><span>Burlington</span><span>Kit Carson</span><b class="lb">Level Blue</b></div>
        <div class="row new"><span>Calhan</span><span>El Paso</span><b>Level Yellow</b></div>
        <div class="row new last"><span></span><span></span><b></b></div>
      </div>
      <div class="scroll"><i></i></div>
    </div>
    <div class="tbar small"><svg class="tl"><use href="#tab"/></svg><span>tableau</span><div class="ti"><svg class="dim"><use href="#undo"/></svg><svg class="dim"><use href="#redo"/></svg><svg class="dim"><use href="#reset"/></svg><svg><use href="#share"/></svg><svg><use href="#down"/></svg><svg><use href="#full"/></svg></div></div>
  </section>
</main>

<footer class="foot">
  <div>
    <h5>Contact</h5>
    <p><u>COVID-19-related issues &amp; concerns</u></p>
    <p><u><b>Colorado Crisis Services</b></u><br>We provide free, confidential, professional and immediate<br>support for any mental health, substance use or emotional<br>concern, 24/7/365.</p>
    <p class="gap">Call 1-844-493-TALK (8255) or text TALK to 38255 to speak to<br>a trained professional.</p>
    <p><u><b>211 Colorado</b></u><br>2-1-1 is a confidential and multilingual service connecting<br>people to vital resources across the state.</p>
    <p><svg class="ph"><use href="#phone"/></svg>Call 2-11 or (866) 760-6489 <svg class="mob" viewBox="0 0 14 16"><path fill="#fff" fill-rule="evenodd" d="M1 0h12v16H1zM3 2v10h8V2z"/></svg>Text your ZIP CODE to<br>898-211</p>
    <p><u><b>CO-HELP</b></u><br>Colorado’s call line for general questions about the novel<br>coronavirus (COVID-19), providing answers in many languages<br>including English, Spanish (Español), Mandarin (普通话) and<br>more.</p>
    <p><svg class="ph"><use href="#phone"/></svg><b class="sb">Call</b> 303-389-1687 or (877) 462-2911</p>
  </div>
  <div>
    <h5>Resources &amp; info</h5>
    <p>Media line (for media only): 303-900-2849</p>
    <p><u>CDPHE main website</u></p>
    <p><u>Colorado Emergency Management</u></p>
    <p><u>Stay at home Colorado guide</u></p>
    <p><u>Help Colorado Now</u> - Volunteer, donate, contribute, apply<br>for funding.</p>
    <p><u>State resource for COVID-19 information</u></p>
    <p><u>OnwardCO.org</u> - One-stop resource for Coloradans impacted<br>by job loss to connect with life essentials, training, and jobs.</p>
    <p><u>Request a website change</u></p>
    <p>If you have symptoms and think you have been exposed, call<br>a health care provider.</p>
  </div>
  <div>
    <h5>Follow us</h5>
    <div class="soc"><span>CDPHE</span><svg class="g1"><use href="#fb"/></svg><svg class="g2"><use href="#tw"/></svg><svg class="g3" viewBox="0 0 16 16"><rect x="1" y="1" width="14" height="14" rx="4"/><circle cx="8" cy="8" r="3.300"/><path d="M12 4h.6"/></svg></div>
    <div class="soc cem"><span>Colorado Emergency Management</span><svg class="g1"><use href="#fb"/></svg><svg class="g4"><use href="#tw"/></svg></div>
    <h5 class="al">Available languages</h5>
    <p class="langs"><u>Español</u> (Spanish) | <u>Tiếng Việt</u> (Vietnamese) |<br><u>Soomaali</u> (Somali) | <u>中文</u> (Simplified Chinese) |<br>(Arabic) <u>العربية</u>&nbsp; | <u>नेपाली</u> (Nepali)</p>
  </div>
</footer>
<div class="legal">
  <span>© 2021 State of Colorado<i>|</i><u>Transparency Online</u><i>|</i><u>Accessibility</u><i>|</i><u>Privacy Statement</u><i>|</i><u>Security Statement</u></span>
  <div class="portal"><svg viewBox="18 28 314 245"><path d="M94 29L125 80 160 255Q90 240 18 260L44 188 28 190 62 110 48 113Z"/><path d="M328 105A121 121 0 1 0 328 195L283 178 280 126Z"/><g fill="none" stroke="#bbbcbe" stroke-width="6"><circle cx="218" cy="151" r="62"/><path d="M105 197L197 122 260 185M123 226L243 122 275 150M125 80L160 60"/></g></svg><div><b>COLORADO</b><span>Official State Web Portal</span></div></div>
</div>
</body>
</html>
```
FILE: styles.css
```css
/* 1rem is ten layout units; every size below is expressed in it */
html{font-size:7.0005px;background:#fff}
*{box-sizing:border-box}
body{margin:0;font:400 1.6rem/2.3rem "Open Sans","Noto Sans CJK SC",sans-serif;color:#000;overflow-x:hidden}
h1,h2,h3,h4,h5,p{margin:0;font-weight:400}
i,em{font-style:normal}
.defs{position:absolute;width:0;height:0}
svg{display:block;flex:none}
.main,.nav,.foot,.legal,.top{white-space:nowrap}

.top{height:13.1rem;display:flex;padding:2.5rem 24.5rem 0 24.6rem}
.brand{display:flex;font-size:1rem;height:8.1em;width:51.3em;--ring:#fff}
.ring{fill:var(--ring)}
.brand svg{height:8.1em;overflow:visible}
.tm{font:700 15px Lato,sans-serif}
.cd{font:900 40px Lato,sans-serif;fill:#fff;letter-spacing:1px}
.m1{width:10.4em}
.m2{width:8.1em;margin-left:.65em}
.btext{margin-left:1.2em;border-left:1px solid #000;padding-left:1.25em}
.btext b,.btext span{display:block}
.btext b{font:900 3.2em/.72 Lato,sans-serif;letter-spacing:.205em}
.btext .n1,.btext .n2{font:700 2.05em/1.12 "DejaVu Serif Condensed","DejaVu Serif",serif;letter-spacing:-.008em}
.btext .n1:nth-child(2){margin-top:.72em}
.second .btext{margin-left:1.5em}
.second{width:40em}
.search{display:flex;align-items:center;margin-left:auto;height:8.4rem;color:#999;font-size:1.75rem;gap:3.9rem}
.search svg{width:2.5rem;height:2.4rem;fill:none;stroke:#001970;stroke-width:3.4}

.nav{height:5.6rem;background:#001970;color:#fff;display:flex;align-items:center;padding-left:33.9rem;font-size:1.58rem}
.nav a:nth-child(1){width:16.2rem}.nav a:nth-child(2){width:27.2rem}.nav a:nth-child(3){width:19.6rem}.nav a:nth-child(4){width:8.2rem}.nav a:nth-child(5){width:24.8rem}
.nav .s1{margin-left:.7rem}.nav .s2{margin-left:.3rem}.nav .s3{margin-left:1.4rem}

.main{padding-left:23.1rem}
.crumbs{display:flex;margin-top:2.4rem;height:2.4rem;font-size:1.42rem;letter-spacing:-.012em;line-height:2.4rem}
.crumbs i{margin:0 .8rem}
h1{font:700 4.19rem/5rem "DejaVu Serif Condensed","DejaVu Serif",serif;margin-top:5.4rem}
.tiles{display:grid;grid-template-columns:67rem 67rem;grid-template-rows:8.9rem 13.8rem;gap:2rem 3.1rem;margin:4rem 0 0 1.5rem}
.tile{display:flex;align-items:center;justify-content:center;font:400 2.5rem/1 "DejaVu Serif Condensed","DejaVu Serif",serif;letter-spacing:.042em}
.tile svg{width:3.9rem;height:3.9rem;margin-right:1.6rem}
.light{background:#f5f5f5}
.dark{background:#001970;color:#fff}

.viz{width:150rem;margin:2rem 0 0 1.5rem;background:#f5f5f5;position:relative}
.vhead{background:#555;color:#fff;height:17rem}
.vhead h2{font:400 4.8rem/5.8rem "Liberation Serif",serif;text-align:center}
.vrow{display:flex}
.vnote{width:55.3rem;padding:5rem 0 0 1.2rem;font:700 1.1rem/1.5rem "Open Sans",sans-serif;letter-spacing:-.046em}
.vnote p{font-weight:700}
.vnote a{display:inline-block;font:600 1.52rem/2rem "Open Sans",sans-serif;letter-spacing:0;color:#4b96b5;border-bottom:1px solid #0000c8;margin-left:.3rem}
.onDark{font-size:.842rem;margin-top:3.6rem;--ring:#555}
.onDark .btext{border-color:#fff}
.onDark .n1,.onDark .n2{font-weight:400;font-size:2.25em;line-height:1.03}
.info{position:absolute;right:1.2rem;top:18.2rem;width:5.1rem;height:5.1rem}
.metrics{display:flex;padding:4.7rem 0 0 2.9rem;gap:15.8rem}
.mg h4{font-size:1.95rem;line-height:2.4rem;text-align:center}
.btns{display:flex;gap:.78rem;margin-top:.4rem}
.btns a{width:20.8rem;height:7.6rem;border:1px solid #000;box-shadow:inset 0 0 0 .5px #000;background:#4870a0;color:#fff;font-weight:600;font-size:1.93rem;line-height:2.5rem;text-align:center;display:flex;align-items:center;justify-content:center;letter-spacing:-.008em}
.btns .on{background:#92b0d8}
.ocs{font-weight:600;font-size:2.95rem;line-height:4rem;text-align:center;margin-top:2.9rem}
.ocs2{font-size:1.7rem;line-height:2rem;text-align:center;letter-spacing:-.022em}
.ocs2 b{letter-spacing:-.03em}
.ocs3{font-size:1.1rem;line-height:1.6rem;text-align:center;letter-spacing:-.024em;color:#333}
.legend{display:grid;grid-template-columns:repeat(6,14.5rem);grid-template-rows:2.4rem 2.5rem;gap:.8rem 2.6rem;padding:3.7rem 0 0 3.75rem}
.lg{display:flex;align-items:center;justify-content:center;font-size:1.88rem}
.st{padding-left:2.4rem}
.lg svg{width:1.9rem;height:1.9rem;margin-left:.7rem}
.green{background:#b5d7a8}.blue{background:#9fc5e8}.yellow{background:#ffe599}.orange{background:#f9cb9c}.red{background:#ea9999}.purple{background:#d5bdd8}
.map{width:98rem;height:69.4rem}
.lines path{stroke:#777;stroke-width:.8px;vector-effect:non-scaling-stroke}
.y{fill:#ffe599}.o{fill:#f9cb9c}.b{fill:#9fc5e8}
.names{font-size:14.4px;letter-spacing:-.025em;text-anchor:middle;dominant-baseline:central}
.perm{display:flex;align-items:center;font-size:1.32rem;line-height:2rem;padding-left:.4rem;margin-top:.2rem}
.perm svg{width:1.1rem;height:1.1rem;margin-right:.4rem}
.mid{font-size:.963rem;margin:5.6rem 0 0 65.6rem;width:20em}
.tbar{height:3.2rem;border-bottom:1px solid #ccc;display:flex;align-items:center;padding:0 1rem 0 1.6rem;background:#f5f5f5;color:#666;font-size:1.7rem;letter-spacing:.24em}
.tl{width:1.9rem;height:1.9rem;margin-right:.7rem}
.ti{margin-left:auto;display:flex;gap:2.4rem}
.ti svg{width:1.6rem;height:1.6rem;fill:none;stroke:#555;stroke-width:1.2}
.ti .dim{stroke:#aaa}

.maint,.trouble,.esp,.note{padding-left:2.4rem}
.maint{font-size:1.57rem;line-height:3rem;margin-top:1.6rem}
.trouble{font:700 2.17rem/3rem "DejaVu Serif Condensed","DejaVu Serif",serif;margin-top:3.2rem}
.trouble a{font-family:"Open Sans",sans-serif;font-weight:600;color:#001970;font-size:2.1rem}
.esp{font-size:1.6rem;line-height:2.4rem;margin-top:1.3rem;letter-spacing:-.012em}
.esp a{color:#001970;text-decoration:underline;text-underline-offset:.3rem}
.note{font-weight:600;font-size:1.56rem;line-height:2.4rem;margin-top:.9rem}
.expand{display:block;width:10.3rem;height:3.7rem;margin-top:3.9rem;border:1px solid #001970;border-bottom:0;background:#fff;color:#001970;font:400 1.58rem/1.4 "Open Sans",sans-serif;padding:0}
.acc{width:143rem;height:4.9rem;background:#001970;color:#fff;display:flex;align-items:center;font-size:1.95rem;padding-left:2rem}
.acc svg{width:1.4rem;height:1rem;margin-right:1.6rem;fill:none;stroke:#fff;stroke-width:1.8}
.frame{position:relative;width:140rem;height:64.9rem;margin:3.1rem 0 3.2rem 1.5rem;border:1px solid #aaa;border-top:2px solid #4a4a4a;border-left-color:#4a4a4a;background:#d1d1d1;overflow:hidden}

.sheet1{width:129.2rem;height:64.9rem;margin-left:5.2rem;background:#fff;padding:1.8rem 0 0 1.9rem;color:#1b1f55;box-shadow:0 0 1.2rem #777}
.dt{display:grid;grid-template-columns:18.2rem 17.3rem 18.1rem 17.7rem 17rem 19.5rem 17.4rem;grid-template-rows:16.1rem 14.2rem 15.8rem 14.5rem;width:125.3rem;border-top:1px solid #333;border-left:1px solid #333;font:700 1.68rem/2.08rem "DejaVu Serif Condensed","DejaVu Serif",serif;letter-spacing:-.01em}
.c{border-right:1px solid #333;border-bottom:1px solid #333;display:flex;align-items:center;padding-left:1.85rem}
.c.pic{padding:0}
.pic svg{width:100%;height:100%}
.c.h{display:block;font:400 2.1rem/2.6rem Lato,sans-serif;letter-spacing:0;padding:3.8rem 0 0 .9rem}
.c.h b{display:block;font-weight:700}
.c.h.green{background:#bcd3ad;padding-left:.6rem}.c.h.blue{background:#a6c4e6}.c.h.yellow{background:#f9e5a1}.c.h.orange{background:#eecba4;padding-left:.5rem}.c.h.red{background:#de9d9d;padding-left:2.3rem}.c.h.purple{background:#d3c1d7;padding-left:1rem}
.c.rl{padding-left:1.35rem;font-size:1.6rem;letter-spacing:-.02em}
.c.hl{padding-left:.35rem;letter-spacing:-.02em}
.c.tall{grid-row:2/5}
.c.must{grid-column:2;padding:0 0 3.4rem 1.4rem}
.c.state{grid-column:7;padding:0 0 5.6rem 1rem}
.c.r5{padding-left:2.7rem}
.c.up{padding-bottom:1.6rem}
.c.hs{font-weight:400;font-size:1.58rem;line-height:1.82rem;letter-spacing:-.01em;padding-top:.6rem}
.c.hs b{font-size:1.48rem}
.c.p1{padding-left:1.4rem}.c.p2{padding-left:1.2rem}.c.p3{padding-left:.4rem}
.c.sys{font-size:1.58rem;line-height:1.93rem;padding-left:.8rem;letter-spacing:-.015em}
.pop{position:absolute;right:1.2rem;top:2.3rem;width:1.9rem;height:1.9rem;fill:none;stroke:#fff;stroke-width:2}
.ctl{position:absolute;background:rgba(0,0,0,.76);display:flex;align-items:center;border-radius:.3rem;color:#fff;box-shadow:0 0 .5rem rgba(0,0,0,.3)}
.ctl svg{width:2rem;height:2rem;fill:none;stroke:#fff;stroke-width:2.2}
.ctl .dim{stroke:#999}
.z1{left:63.4rem;top:58.8rem;width:13.1rem;height:4.6rem;justify-content:center;gap:2.2rem}
.z2{left:56.3rem;top:58.8rem;width:27.2rem;height:4.4rem;gap:2.25rem}
.pg{display:flex;width:14.1rem;height:4.4rem;align-items:center;font:700 1.4rem/1.3 Roboto,sans-serif;padding-left:1.3rem;gap:2rem;margin-right:-1rem}

.sheet2{width:80rem;height:66rem;margin:.8rem 0 0 29.8rem;background:#fff;color:#23285f;box-shadow:0 0 1.2rem #777;padding:1.2rem 0 0 1.85rem}
.rt-head{display:flex;justify-content:space-between;width:76.4rem;height:3.2rem;font:900 1.95rem/2.8rem Lato,sans-serif;letter-spacing:-.024em}
.rt-head span{font-size:1.3rem;line-height:2.2rem;letter-spacing:-.045em}
.rt{display:grid;grid-template-columns:12.4rem 11.4rem 11.4rem 10.8rem 9.5rem 10.3rem 10.5rem;grid-template-rows:4.2rem 8.7rem 5.6rem 3.5rem 1.9rem 15.9rem 3.5rem 3.5rem 3.5rem 2.3rem 4.6rem 4.2rem;border-top:1px solid #23285f;border-left:1px solid #23285f;width:76.4rem;font:400 .88rem/1.03rem "DejaVu Serif Condensed","DejaVu Serif",serif}
.rt>div{border-right:1px solid #4b5082;border-bottom:1px solid #4b5082;padding-left:.3rem;display:flex;align-items:center}
.rt .h{font:400 1.15rem/1.2rem Lato,sans-serif;letter-spacing:-.03em}
.rt .k{font-weight:700;font-size:.88rem;line-height:1.1rem}
.rt .k i{font-style:italic;font-weight:400}
.rt .pic{padding:.4rem 2.6rem .3rem}
.track{position:absolute;right:0;top:0;width:1.6rem;height:100%;background:#f8f8f8}
.track i{display:block;width:.8rem;height:31rem;margin:.2rem 0 0 .5rem;border-radius:.4rem;background:#c1c1c1}

.cities{width:65rem;margin-left:1.5rem;padding-top:4.05rem}
.cities h2{font-size:3.25rem;line-height:3.9rem;letter-spacing:-.03em;text-align:center;padding-right:.6rem}
.filters{display:flex;margin-top:2.65rem;font-size:2rem;line-height:2.6rem;letter-spacing:-.01em;text-align:center}
.fs{width:29.1rem;margin-left:6.2rem}
.fo{width:17.2rem;margin-left:6.3rem}
.box{display:flex;justify-content:space-between;align-items:center;height:2rem;border:1px solid #888;font-size:1.15rem;line-height:1.7rem;padding:0 .5rem 0 .3rem}
.box i{border:.35rem solid transparent;border-top:.5rem solid #000;border-bottom:0}
.heads{display:flex;height:2.4rem;margin-top:4.5rem;font-size:2rem;line-height:2.4rem;text-align:center;letter-spacing:-.02em}
.heads span:nth-child(1){width:25.2rem;margin-left:.8rem}
.heads span:nth-child(2){width:16rem;margin-left:-.1rem}
.tablewrap{display:flex;padding-left:.8rem}
.rows{width:61.6rem;border-right:1px solid #ccc;border-bottom:1px solid #ccc}
.row{display:grid;grid-template-columns:25.2rem 16rem 1fr;height:2.4rem;line-height:2.3rem;font-size:1.95rem;letter-spacing:-.022em}
.row span{padding-left:.6rem}
.row b{font-weight:600;color:#edc948;border-left:1px solid #ccc;padding-left:.3rem;letter-spacing:-.03em}
.row .lb{color:#4e79a7}.row .lo{color:#f28e2b}
.row:nth-child(even) span:nth-child(2),.row:nth-child(even) b{background:#f5f5f5}
.new{border-top:1px solid #ccc}
.row.last{height:.4rem}
.scroll{width:1.5rem;background:#fafafa}
.scroll i{display:block;width:.8rem;height:12.4rem;margin:.1rem 0 0 .35rem;border-radius:.4rem;background:#c1c1c1}
.small{height:2.7rem;margin-top:.8rem}

.foot{height:62rem;margin-top:3.5rem;background:#5c666f;color:#fff;display:grid;grid-template-columns:44.3rem 44.4rem 45.9rem;column-gap:3.3rem;padding:2.2rem 0 0 24rem;font-size:1.575rem}
.foot h5{font:700 2.13rem/3rem "DejaVu Serif Condensed","DejaVu Serif",serif;height:5.4rem;border-bottom:1px solid #fff}
.foot p{line-height:2.3rem;margin-top:1.14rem}
.foot h5+p{margin-top:2.15rem}
.foot .gap{margin-top:2.2rem}
.foot u{text-underline-offset:.3rem}
.foot b{letter-spacing:-.03em}
.foot .sb{font-weight:600}
.foot p svg{display:inline-block;vertical-align:-.2rem}
.ph{width:1.5rem;height:1.5rem;margin-right:.2rem}
.mob{width:1.4rem;height:1.6rem;margin:0 .4rem 0 1.6rem}
.soc{display:flex;align-items:center;height:3rem;margin-top:2.3rem;fill:#fff;font-weight:600;font-size:1.55rem;letter-spacing:-.01em}
.soc.cem{margin-top:1.9rem}
.soc svg{height:1.6rem;width:1.6rem}
.g1{margin-left:2rem}.g2{margin-left:6.2rem}.foot .g3{margin-left:4rem;fill:none;stroke:#fff;stroke-width:1.5}.g4{margin-left:4.8rem}
.foot .al{font-family:"Open Sans",sans-serif;font-weight:600;font-size:2.07rem;margin-top:5rem;height:5.5rem}
.foot .langs{line-height:3.45rem;margin-top:1.7rem}
.legal{height:6.5rem;background:#bbbcbe;display:flex;align-items:center;justify-content:space-between;padding:0 23rem 0 23.1rem;font-size:1.36rem}
.legal u{text-underline-offset:.25rem}
.legal i{margin:0 .8rem}
.portal{display:flex;width:13.6rem}
.portal svg{height:2.8rem;width:3.6rem}
.portal div{border-left:1px solid #000;margin-left:.5rem;padding-left:.4rem;font:900 1rem/1.5rem Lato,sans-serif}
.portal b{display:block;letter-spacing:.24em;font-size:1.1rem}
.portal span{display:block;font:700 .72rem/1.3rem "DejaVu Serif Condensed",serif}
```
